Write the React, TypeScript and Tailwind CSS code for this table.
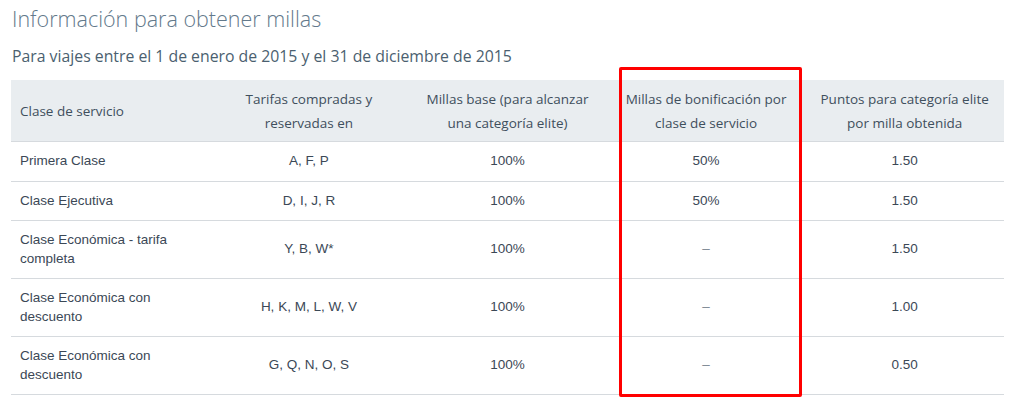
import React from 'react';

type Row = {
  clase: string;
  tarifas: string;
  base: string;
  bonus: string;
  puntos: string;
};

const rows: Row[] = [
  { clase: 'Primera Clase', tarifas: 'A, F, P', base: '100%', bonus: '50%', puntos: '1.50' },
  { clase: 'Clase Ejecutiva', tarifas: 'D, I, J, R', base: '100%', bonus: '50%', puntos: '1.50' },
  { clase: 'Clase Económica - tarifa completa', tarifas: 'Y, B, W*', base: '100%', bonus: '–', puntos: '1.50' },
  { clase: 'Clase Económica con descuento', tarifas: 'H, K, M, L, W, V', base: '100%', bonus: '–', puntos: '1.00' },
  { clase: 'Clase Económica con descuento', tarifas: 'G, Q, N, O, S', base: '100%', bonus: '–', puntos: '0.50' },
];

const headFont = { fontFamily: '"Open Sans", "Noto Sans", sans-serif' };

export default function App() {
  return (
    <div className="w-[1024px] h-[416px] bg-white px-[11px] pt-[4px]">
      <h1
        style={headFont}
        className="text-[21.5px] font-light leading-[30px] text-[#63798b] pl-[1px]"
      >
        Información para obtener millas
      </h1>
      <h2
        style={headFont}
        className="mt-[11px] text-[15.8px] leading-[22px] text-[#4b5f70] pl-[1px]"
      >
        Para viajes entre el 1 de enero de 2015 y el 31 de diciembre de 2015
      </h2>

      <div className="relative mt-[13px] w-[993px]">
        <table className="w-full table-fixed border-collapse">
          <thead>
            <tr style={headFont} className="bg-[#e9edf0] text-[13.5px] leading-[24px] text-[#3f4f5d]">
              <th className="pl-[9px] pr-2 pt-[7px] pb-[6px] text-left font-normal border-b border-[#d6dade]">
                Clase de servicio
              </th>
              <th className="px-2 pt-[7px] pb-[6px] text-center font-normal border-b border-[#d6dade]">
                Tarifas compradas y<br />reservadas en
              </th>
              <th className="px-2 pt-[7px] pb-[6px] text-center font-normal border-b border-[#d6dade]">
                Millas base (para alcanzar<br />una categoría elite)
              </th>
              <th className="px-2 pt-[7px] pb-[6px] text-center font-normal border-b border-[#d6dade]">
                Millas de bonificación por<br />clase de servicio
              </th>
              <th className="px-2 pt-[7px] pb-[6px] text-center font-normal border-b border-[#d6dade]">
                Puntos para categoría elite<br />por milla obtenida
              </th>
            </tr>
          </thead>
          <tbody>
            {rows.map((r, i) => (
              <tr
                key={i}
                className="text-[13.5px] leading-[18.5px] text-[#3b4856] border-b border-[#d6dade]"
                style={{ fontFamily: '"Liberation Sans", Arial, sans-serif' }}
              >
                <td className="pl-[9px] pr-[20px] py-[10px] align-middle">{r.clase}</td>
                <td className="px-2 py-[10px] text-center align-middle">{r.tarifas}</td>
                <td className="px-2 py-[10px] text-center align-middle">{r.base}</td>
                <td className={`px-2 py-[10px] text-center align-middle ${r.bonus === '–' ? 'text-[#7b8792]' : ''}`}>
                  {r.bonus}
                </td>
                <td className="px-2 py-[10px] text-center align-middle">{r.puntos}</td>
              </tr>
            ))}
          </tbody>
        </table>

        {/* highlight box over the bonus column */}
        <div className="absolute left-[608px] top-[-13px] w-[183px] h-[330px] border-[3px] border-[#ff0000] rounded-[2px] pointer-events-none" />
      </div>
    </div>
  );
}
